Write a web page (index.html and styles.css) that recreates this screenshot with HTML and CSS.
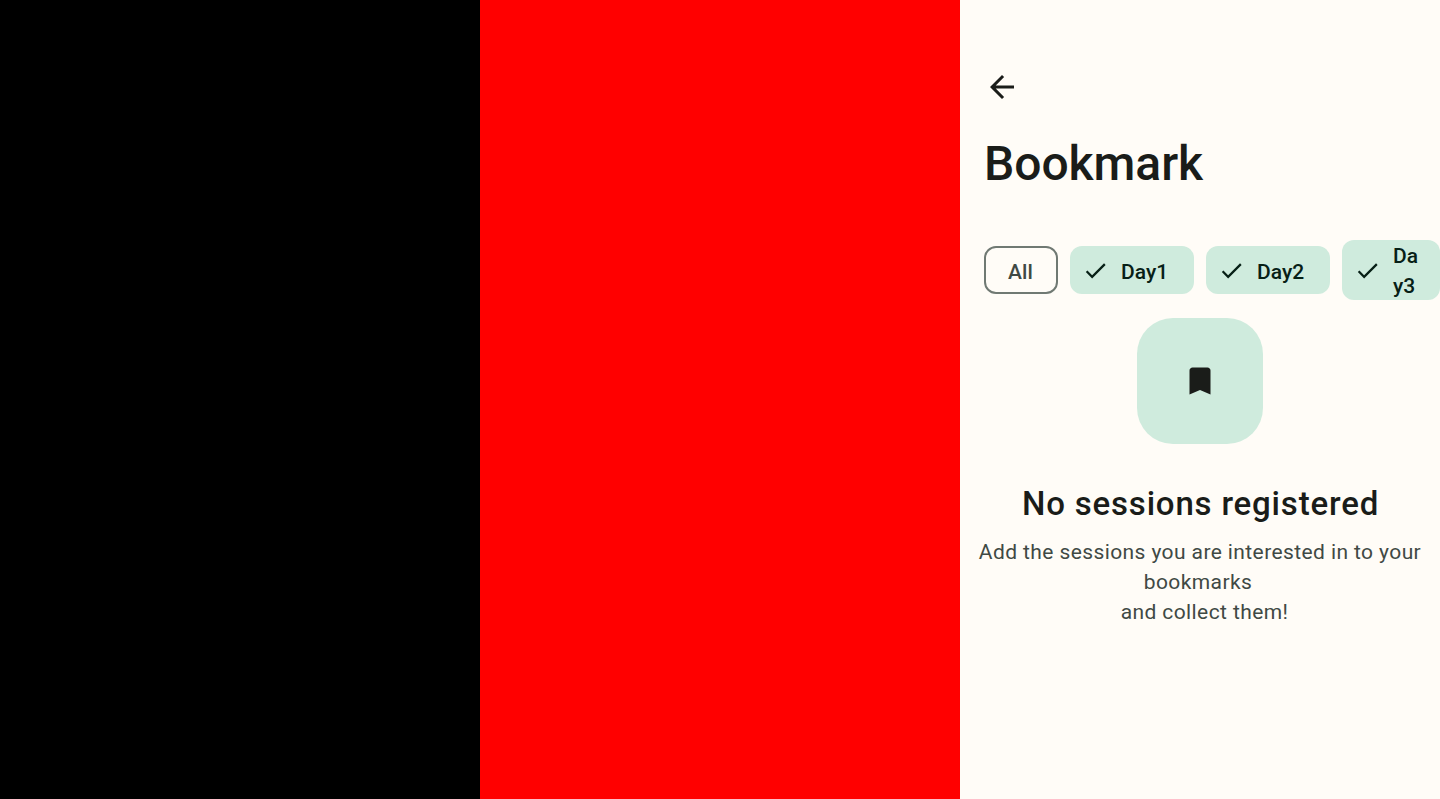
FILE: index.html
```html
<!DOCTYPE html>
<html lang="en">
<head>
<meta charset="utf-8">
<title>Bookmark</title>
<link rel="stylesheet" href="styles.css">
</head>
<body>
<div class="layout">
  <div class="pane pane-black"></div>
  <div class="pane pane-red"></div>
  <main class="pane screen">
    <button class="back" aria-label="Back"><svg viewBox="0 0 24 24"><path d="M20 11H7.830l5.590-5.590L12 4l-8 8 8 8 1.410-1.410L7.830 13H20v-2z"/></svg></button>
    <h1 class="title">Bookmark</h1>
    <div class="chips">
      <button class="chip chip-all">All</button>
      <button class="chip chip-on"><svg viewBox="0 0 24 24"><path d="M9 16.170L4.830 12l-1.420 1.410L9 19 21 7l-1.410-1.410z"/></svg><span>Day1</span></button>
      <button class="chip chip-on"><svg viewBox="0 0 24 24"><path d="M9 16.170L4.830 12l-1.420 1.410L9 19 21 7l-1.410-1.410z"/></svg><span>Day2</span></button>
      <button class="chip chip-on chip-narrow"><svg viewBox="0 0 24 24"><path d="M9 16.170L4.830 12l-1.420 1.410L9 19 21 7l-1.410-1.410z"/></svg><span>Day3</span></button>
    </div>
    <section class="empty">
      <div class="badge"><svg viewBox="0 0 24 24"><path d="M17 3H7c-1.100 0-2 .9-2 2v16l7-3 7 3V5c0-1.100-.9-2-2-2z"/></svg></div>
      <h2 class="heading">No sessions registered</h2>
      <p class="message">Add the sessions you are interested in to your <span class="trail">bookmarks</span><br><span class="lead">and collect them!</span></p>
    </section>
  </main>
</div>
</body>
</html>
```
FILE: styles.css
```css
* { box-sizing: border-box; }
body { margin: 0; font-family: Roboto, sans-serif; }
.layout { display: grid; grid-template-columns: repeat(3, 480px); height: 799px; overflow: hidden; }
.pane-black { background: #000; }
.pane-red { background: #f00; }
.screen { background: #fffcf7; color: #1a1c19; padding-top: 69px; overflow: hidden; }
button { border: 0; background: none; padding: 0; font: inherit; color: inherit; }
svg { display: block; fill: currentColor; flex: none; }
.back { display: block; margin-left: 24px; }
.back svg { width: 36px; height: 36px; }
.title { margin: 25px 0 0 24px; font-size: 48px; line-height: 68px; font-weight: 500; letter-spacing: -.05px; }
.chips { display: flex; align-items: center; gap: 12px; height: 60px; margin: 42px 0 0 24px; }
.chip { flex: none; display: flex; align-items: center; height: 48px; border-radius: 12px; font-size: 21px; line-height: 30px; font-weight: 500; letter-spacing: .05px; }
.chip-all { width: 74px; border: 2px solid #707973; justify-content: center; color: #404944; padding: 3px 1px 0 0; }
.chip-on { width: 124px; padding-left: 12px; gap: 12px; background: #cfebdd; color: #072016; }
.chip-on svg { width: 27px; height: 27px; }
.chip-on span { padding-top: 3px; }
.chip-narrow { width: 98px; height: 60px; }
.chip-narrow span { width: 26px; padding-top: 2px; text-align: left; word-break: break-all; }
.empty { display: flex; flex-direction: column; align-items: center; margin-top: 18px; }
.badge { width: 126px; height: 126px; border-radius: 36px; background: #cfebdd; display: grid; place-items: center; }
.badge svg { width: 36px; height: 36px; }
.heading { margin: 36px 0 0; padding-left: 1px; font-size: 33px; line-height: 48px; font-weight: 500; letter-spacing: .82px; }
.message { margin: 9px 0 0; width: 456px; text-align: center; color: #404944; font-size: 21px; line-height: 30px; letter-spacing: .4px; }
.trail { padding-right: 4px; }
.lead { padding-left: 9px; }
```
